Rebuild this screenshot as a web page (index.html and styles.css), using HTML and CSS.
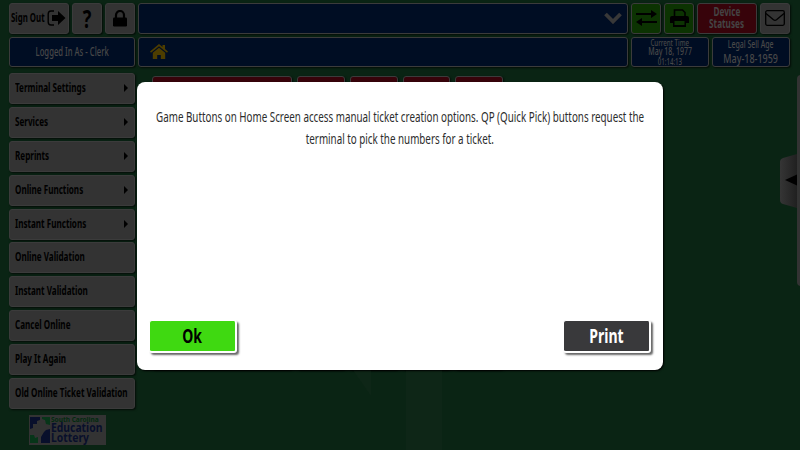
FILE: index.html
```html
<!DOCTYPE html>
<html lang="en">
<head>
<meta charset="utf-8">
<title>Lottery Terminal</title>
<link rel="stylesheet" href="styles.css">
</head>
<body>
<div class="terminal">
  <header class="toolbar">
    <button class="tile sign-out"><span class="t">Sign Out</span>
      <svg width="19" height="16" viewBox="0 0 19 16"><path d="M7 1H4Q1.200 1 1.200 4v8q0 3 2.800 3h3" fill="none" stroke="#000" stroke-width="1.400"/><path d="M5 5h6V1l7.500 7-7.500 7v-4H5z"/></svg>
    </button>
    <button class="tile help"><span class="t">?</span></button>
    <button class="tile"><svg width="14" height="17" viewBox="0 0 14 17"><path d="M3 8V5a4 4 0 0 1 8 0v3" fill="none" stroke="#000" stroke-width="2.200"/><rect y="7.500" width="14" height="9" rx="1.200"/></svg></button>
    <div class="tile blue picker"><svg width="18" height="12" viewBox="0 0 18 12"><path d="M1.500 2 9 9.500 16.500 2" fill="none" stroke="#383838" stroke-width="3.800"/></svg></div>
    <button class="tile green"><svg width="21" height="16" viewBox="0 0 21 16"><path d="M0 3h15V0l6 4-6 4V5H0zM21 11H6V8l-6 4 6 4v-3h15z"/></svg></button>
    <button class="tile green"><svg width="19" height="18" viewBox="0 0 19 18"><path d="M4.500 8V1h8l2.500 2.500V8" fill="none" stroke="#000" stroke-width="1.600"/><path fill-rule="evenodd" d="M2 7h15q2 0 2 2v5h-3v4H3v-4H0V9q0-2 2-2zm2.500 5v4h10v-4z"/></svg></button>
    <button class="tile red status"><span class="t">Device</span><span class="t">Statuses</span></button>
    <button class="tile"><svg width="20" height="16" viewBox="0 0 20 16"><g fill="none" stroke="#000" stroke-width="1.300"><rect x=".7" y=".7" width="18.600" height="14.600" rx="1.500"/><path d="m1 3.500 7.500 6.300q1.500 1.200 3 0L19 3.500"/></g></svg></button>
  </header>
  <section class="infobar">
    <div class="tile blue user"><span class="t">Logged In As - Clerk</span></div>
    <div class="tile blue home"><svg width="18" height="15" viewBox="0 0 18 15"><path d="m0 7.500 9-7.500 3.500 3V1h2.500v4l3 2.500-1 1.200L9 2.200 1 8.700z"/><path d="m2.800 8.800 6.200-5 6.200 5V15h-4.400v-4H7.200v4H2.800z"/></svg></div>
    <div class="tile blue clock"><span class="t">Current Time</span><span class="t date">May 18, 1977</span><span class="t">01:14:13</span></div>
    <div class="tile blue age"><span class="t">Legal Sell Age</span><span class="t date">May-18-1959</span></div>
  </section>
  <main class="workspace">
    <aside class="sidebar">
      <nav class="menu">
        <button class="tile more"><span class="t">Terminal Settings</span></button>
        <button class="tile more"><span class="t">Services</span></button>
        <button class="tile more"><span class="t">Reprints</span></button>
        <button class="tile more"><span class="t">Online Functions</span></button>
        <button class="tile more"><span class="t">Instant Functions</span></button>
        <button class="tile"><span class="t">Online Validation</span></button>
        <button class="tile"><span class="t">Instant Validation</span></button>
        <button class="tile"><span class="t">Cancel Online</span></button>
        <button class="tile"><span class="t">Play It Again</span></button>
        <button class="tile"><span class="t">Old Online Ticket Validation</span></button>
      </nav>
      <div class="logo">
        <svg width="20" height="26" viewBox="0 0 20 26"><path fill="#080f2b" d="M0 0h10v3L7 4v3L3 7v4l-3 1zM11 20l3-5 2-2 4-1v14h-9z"/><path fill="#073519" d="M12 0h8v8l-4-1-1-4-3-1zM0 18h4l1 3 3-1v6H0z"/></svg>
        <div class="logo-text"><span class="t state">South Carolina</span><span class="t">Education</span><span class="t">Lottery</span></div>
      </div>
    </aside>
    <div class="games"><i class="game wide"></i><i class="game"></i><i class="game"></i><i class="game"></i><i class="game"></i></div>
  </main>
  <svg class="watermark" width="130" height="80" viewBox="0 0 130 80"><path d="M38 0h18v26zM91 0h36v80H91z"/></svg>
  <div class="drawer"></div>
  <svg class="drawer-tab" width="17" height="54" viewBox="0 0 17 54"><defs><linearGradient id="tab"><stop stop-color="#353535"/><stop offset="1" stop-color="#202020"/></linearGradient></defs><path fill="url(#tab)" d="M17 0v54L3 50q-3-1-3-4V8q0-3 3-4z"/><path d="M5 26 17 20.500v11z"/></svg>
  <div class="dialog" role="dialog">
    <p class="message"><span class="t">Game Buttons on Home Screen access manual ticket creation options. QP (Quick Pick) buttons request the</span><span class="t">terminal to pick the numbers for a ticket.</span></p>
    <div class="actions"><button class="action ok"><span class="t">Ok</span></button><button class="action print"><span class="t">Print</span></button></div>
  </div>
</div>
</body>
</html>
```
FILE: styles.css
```css
* { box-sizing: border-box; }
body { margin: 0; }
svg { display: block; flex: none; }
button { font: inherit; color: inherit; padding: 0; }

.terminal {
  position: relative;
  width: 800px;
  height: 450px;
  overflow: hidden;
  background: #0a2414;
  font: 700 12px/1 "Noto Sans", sans-serif;
  color: #000;
}
/* condensed lettering */
.t {
  display: block;
  flex: none;
  white-space: nowrap;
  transform: scaleX(var(--squeeze, .675));
}
.toolbar, .infobar { display: grid; column-gap: 3px; padding: 0 9px; }
.toolbar { grid-template-columns: 60px 30px 30px 490px 30px 30px 60px 30px; padding-top: 3px; }
.infobar { grid-template-columns: 126px 490px 78px 78px; padding-top: 3px; }
.tile {
  display: flex;
  align-items: center;
  justify-content: center;
  height: 30.500px;
  border: 1px solid #3b3b3b;
  border-radius: 3px;
  background: #333;
  box-shadow: 1px 1px 2px #000a;
}
.blue { background: #000d23; }
.green { background: #0c3302; }
.red { background: #37030a; color: #444; }
.sign-out { justify-content: space-between; padding: 0 2px 1px 1px; --squeeze: .655; }
.sign-out .t { width: 34px; transform-origin: left; }
.help { font-size: 25px; --squeeze: .72; }
.picker { justify-content: flex-end; padding-right: 5px; }
.status { flex-direction: column; font-size: 11.500px; line-height: 11.500px; padding-bottom: 1px; --squeeze: .71; }
.user { color: #484848; font-weight: 500; --squeeze: .64; }
.home { justify-content: flex-start; padding-left: 11px; fill: #4d3d00; }
.clock, .age { flex-direction: column; color: #484848; font-weight: 500; font-size: 8.500px; line-height: 9.500px; --squeeze: .72; }
.clock .date { font-size: 10px; --squeeze: .7; }
.age { font-size: 10.500px; line-height: 13.500px; --squeeze: .66; }
.age .date { font-size: 13px; --squeeze: .69; }

.workspace { display: flex; gap: 17px; padding: 6px 9px 0; }
.sidebar { width: 126px; }
.menu { display: grid; gap: 2.900px; }
.menu .tile { justify-content: space-between; padding: 0 6px 1px 5px; height: 31px; }
.menu .t { transform-origin: left; width: 0; }
.more::after {
  content: "";
  border: 4px solid transparent;
  border-left-color: #000;
  border-right: 0;
}
.logo { display: flex; gap: 1px; width: 77px; height: 30px; margin: 6px 0 0 20px; padding: 1px; background: #333; }
.logo svg { margin-top: 1px; }
.logo-text { width: 54px; color: #080f2b; font-size: 11.500px; line-height: 10px; --squeeze: .9; }
.logo-text .t { transform-origin: left; width: 0; }
.logo-text .state { font-size: 7px; line-height: 7px; color: #022a0f; --squeeze: .93; }
.games { display: flex; gap: 5px; padding-top: 3px; }
.game { width: 47.800px; height: 294px; border: 1px solid #3b3b3b; border-radius: 3px; background: #37030a; box-shadow: 1px 1px 2px #000a; }
.game.wide { width: 140px; }

.watermark { position: absolute; left: 315px; top: 370px; fill: #0e2617; }
.drawer { position: absolute; left: 797px; top: 75px; width: 12px; height: 211px; border-radius: 4px; background: #333; }
.drawer-tab { position: absolute; left: 780px; top: 154px; }

.dialog {
  position: absolute;
  left: 137px;
  top: 82px;
  width: 526px;
  height: 288px;
  display: flex;
  flex-direction: column;
  justify-content: space-between;
  padding: 23px 12px 17px;
  border-radius: 8px;
  background: #fff;
  box-shadow: 1px 1px 2px #000;
}
.message {
  display: flex;
  flex-direction: column;
  align-items: center;
  margin: 0;
  color: #2c2c2c;
  font-size: 15px;
  font-weight: 400;
  line-height: 22px;
  --squeeze: .654;
}
.actions { display: flex; justify-content: space-between; }
.action {
  display: flex;
  align-items: center;
  justify-content: center;
  width: 88px;
  height: 33px;
  border: 2px solid #fff;
  border-left-width: 1px;
  border-top-width: 1px;
  border-radius: 3px;
  font-size: 20px;
  box-shadow: 2px 2px 2px #0009;
  --squeeze: .7;
}
.ok { background: #3fd911; }
.print { background: #39393b; color: #fff; }
```
